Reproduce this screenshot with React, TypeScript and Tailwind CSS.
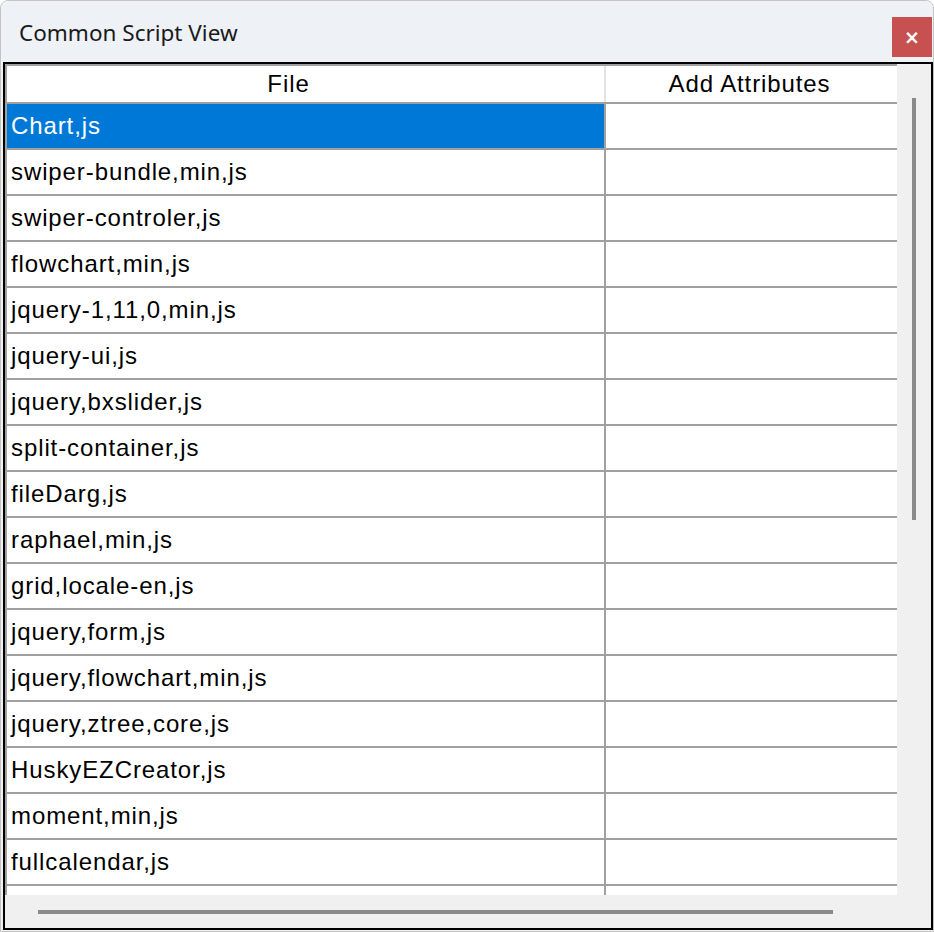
const FILES = [
  "Chart,js",
  "swiper-bundle,min,js",
  "swiper-controler,js",
  "flowchart,min,js",
  "jquery-1,11,0,min,js",
  "jquery-ui,js",
  "jquery,bxslider,js",
  "split-container,js",
  "fileDarg,js",
  "raphael,min,js",
  "grid,locale-en,js",
  "jquery,form,js",
  "jquery,flowchart,min,js",
  "jquery,ztree,core,js",
  "HuskyEZCreator,js",
  "moment,min,js",
  "fullcalendar,js",
  "",
];

const cellFont = "font-['Liberation_Sans',Arial,sans-serif] text-[24px] tracking-[0.9px] leading-none";

function Row({ name, selected }: { name: string; selected: boolean }) {
  return (
    <div className="flex h-[46px] shrink-0 border-b-2 border-[#a0a0a0]">
      <div
        className={`flex w-[599px] shrink-0 items-center border-r-2 border-[#a0a0a0] pl-[4px] ${cellFont} ${
          selected ? "bg-[#0078d7] text-white" : "bg-white text-black"
        }`}
      >
        {name}
      </div>
      <div className="flex-1 bg-white" />
    </div>
  );
}

export default function App() {
  return (
    <div className="h-[932px] w-[934px] bg-white">
      <div className="flex h-full w-full flex-col overflow-hidden rounded-t-[8px] border border-[#c4c4c4] bg-[#f0f0f0]">
        {/* Title bar */}
        <div className="flex h-[61px] shrink-0 items-start justify-between bg-[#eef2f7]">
          <span className="mt-[18px] pl-[18px] font-['Noto_Sans',sans-serif] text-[22.5px] leading-[28px] text-[#1a1a1a]">
            Common Script View
          </span>
          <button className="mr-[1px] mt-[16px] flex h-[40px] w-[40px] items-center justify-center bg-[#c75050] font-['DejaVu_Sans',sans-serif] text-[19px] font-bold text-white">
            ×
          </button>
        </div>

        {/* Client */}
        <div className="flex min-h-0 flex-1 pb-[1px] pl-[2px]">
          <div className="grid min-h-0 flex-1 grid-cols-[1fr_34px] grid-rows-[1fr_33px] border-2 border-black">
            {/* Table */}
            <div className="flex min-h-0 flex-col overflow-hidden border-l-2 border-t-2 border-[#a0a0a0] bg-white">
              <div className="flex h-[38px] shrink-0 border-b-2 border-[#a0a0a0]">
                <div className={`flex w-[599px] shrink-0 items-center justify-center border-r-2 border-[#e3e3e3] pr-[34px] text-black ${cellFont}`}>
                  File
                </div>
                <div className={`flex flex-1 items-center justify-center pr-[4px] text-black ${cellFont}`}>Add Attributes</div>
              </div>
              {FILES.map((f, i) => (
                <Row key={i} name={f} selected={i === 0} />
              ))}
            </div>

            {/* Vertical scrollbar */}
            <div className="bg-[#f0f0f0] pl-[15px] pt-[34px]">
              <div className="h-[422px] w-[4px] bg-[#8a8a8a]" />
            </div>

            {/* Horizontal scrollbar */}
            <div className="bg-[#f0f0f0] pl-[33px] pt-[15px]">
              <div className="h-[4px] w-[795px] bg-[#8a8a8a]" />
            </div>
            <div className="bg-[#f0f0f0]" />
          </div>
        </div>
      </div>
    </div>
  );
}
